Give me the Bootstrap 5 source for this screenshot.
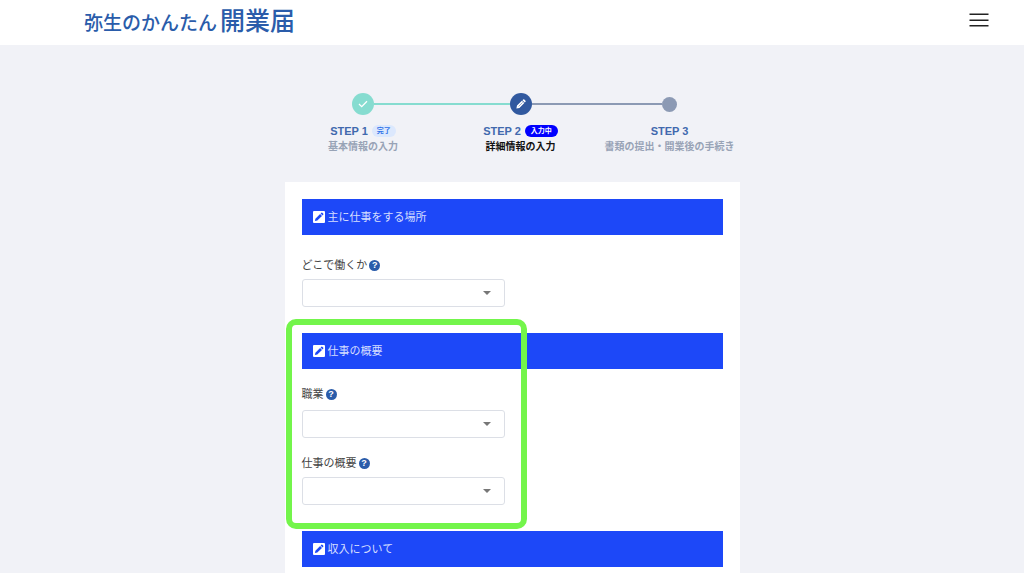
<!DOCTYPE html>
<html lang="ja">
<head>
<meta charset="utf-8">
<meta name="viewport" content="width=device-width, initial-scale=1">
<title>弥生のかんたん開業届</title>
<link href="https://cdn.jsdelivr.net/npm/bootstrap@5.3.0/dist/css/bootstrap.min.css" rel="stylesheet">
<style>
body{background:#f1f2f7;color:#444;font-family:"Liberation Sans","Noto Sans CJK JP",sans-serif;font-size:11px;line-height:16px}
.site-header{height:45px;padding:0 35px 4px 84px}
.brand{color:#2a5caa;font-size:19px;font-weight:500;line-height:32px;padding-top:4px}
.brand:hover{color:#2a5caa}
.brand strong{font-size:25px;font-weight:500;margin-left:3px}
.flow{max-width:455px}
.steps{display:grid;grid-template-columns:157fr 158fr 140fr;margin-top:48px;margin-bottom:28px}
.track{height:22px}
.track i{flex:1;height:2px;background:#8c9ab4}
.track i.passed{background:#86dcd0}
.track i.blank{background:none}
.dot{width:22px;height:22px;border-radius:50%;background:#86dcd0}
.dot.now{background:#31599f}
.dot.todo{width:15px;height:15px;background:#8c9ab4}
.step-name{color:#4169ae;font-weight:700;margin-top:8px;height:16px}
.step-text{color:#98a3b6;font-size:10px;font-weight:700;line-height:14px;margin-top:1px}
.step-text.now{color:#111}
.tag{font-size:7px;line-height:12px;padding:0 5px;border-radius:6px;background:#dce8fd;color:#2f72e8}
.tag.now{background:#00f;color:#fff;padding:0 6px}
.panel{padding:17px 17px 0}
.bar{height:36px;padding:0 11px;gap:3px;background:#1d48f8;color:#d5deff;font-size:11px;line-height:16px;font-weight:400}
.field{padding-top:22px;padding-bottom:26px}
.caption{gap:2px}
.field label,.help{display:block;line-height:16px}
.field .pick{width:203px;height:28px;margin-top:6px;padding:0 24px 0 8px;font-size:11px;border:1px solid #dcdfe6;border-radius:3px;background:#fff url("data:image/svg+xml,%3Csvg xmlns='http://www.w3.org/2000/svg' viewBox='0 0 8 4'%3E%3Cpath fill='%23777' d='M0 0h8L4 4z'/%3E%3C/svg%3E") no-repeat right 13px center/8px 4px}
.field.tight{padding-top:17px;padding-bottom:0}
.field.tight .pick{margin-top:8px}
.field.last{padding-top:17px}
.help{width:11px;height:11px;border-radius:50%;background:#2a5caa;color:#fff;font-size:9px;font-weight:700;line-height:11px;border:0;padding:0;text-align:center}
.highlight{position:absolute;left:-16px;top:-14px;bottom:2px;width:241px;border:6px solid #73f54b;border-radius:10px;pointer-events:none}
</style>
</head>
<body>
<svg class="d-none" aria-hidden="true">
  <symbol id="edit" viewBox="0 0 12 12"><rect width="12" height="12" rx="1" fill="#fff"/><path d="M1.9 10.1 2.4 7.7 7.1 3 9 4.9 4.3 9.6zM7.6 2.5 8.4 1.7q.4-.4.9 0l1 1q.4.5 0 .9L9.5 4.4z" fill="#1d48f8"/></symbol>
</svg>
<header class="site-header bg-white d-flex justify-content-between align-items-center">
  <a href="#" class="brand text-decoration-none">弥生のかんたん<strong>開業届</strong></a>
  <button class="btn p-0 border-0 d-flex" type="button" aria-label="メニュー"><svg width="20" height="15" viewBox="0 0 20 15" fill="none" stroke="#222" stroke-width="1.6"><path d="M.5 1.2h19M.5 7.2h19M.5 12.8h19"/></svg></button>
</header>
<main class="flow container-fluid p-0">
  <div class="steps text-center">
    <div>
      <div class="track d-flex align-items-center"><i class="blank"></i><span class="dot d-flex align-items-center justify-content-center"><svg width="10" height="8" viewBox="0 0 10 8" fill="none" stroke="#fff" stroke-width="1.3"><path d="M1 4l2.7 2.6L9 1.2"/></svg></span><i class="passed"></i></div>
      <div class="step-name d-flex justify-content-center align-items-center gap-1">STEP 1 <span class="tag">完了</span></div>
      <div class="step-text">基本情報の入力</div>
    </div>
    <div>
      <div class="track d-flex align-items-center"><i class="passed"></i><span class="dot now d-flex align-items-center justify-content-center"><svg width="10" height="10" viewBox="0 0 10 10" fill="#fff"><path d="M.4 9.6 1 6.6 5.9 1.7 8.3 4.1 3.4 9zM6.4 1.2 7.2.5q.6-.5 1.1 0l1.2 1.2q.5.6 0 1.1L8.8 3.6z"/><path d="M2.6 7.4 6.6 3.4" stroke="#31599f" stroke-width=".5"/></svg></span><i></i></div>
      <div class="step-name d-flex justify-content-center align-items-center gap-1">STEP 2 <span class="tag now">入力中</span></div>
      <div class="step-text now">詳細情報の入力</div>
    </div>
    <div>
      <div class="track d-flex align-items-center"><i></i><span class="dot todo"></span><i class="blank"></i></div>
      <div class="step-name d-flex justify-content-center align-items-center">STEP 3</div>
      <div class="step-text text-nowrap">書類の提出・開業後の手続き</div>
    </div>
  </div>
  <form class="panel bg-white">
    <section>
      <h2 class="bar m-0 d-flex align-items-center"><svg width="12" height="12"><use href="#edit"/></svg>主に仕事をする場所</h2>
      <div class="field">
        <div class="caption d-flex align-items-center"><label for="place">どこで働くか</label><button type="button" class="help" aria-label="ヘルプ">?</button></div>
        <select id="place" class="form-select pick"><option></option></select>
      </div>
    </section>
    <section class="position-relative">
      <h2 class="bar m-0 d-flex align-items-center"><svg width="12" height="12"><use href="#edit"/></svg>仕事の概要</h2>
      <div class="field tight">
        <div class="caption d-flex align-items-center"><label for="job">職業</label><button type="button" class="help" aria-label="ヘルプ">?</button></div>
        <select id="job" class="form-select pick"><option></option></select>
      </div>
      <div class="field last">
        <div class="caption d-flex align-items-center"><label for="summary">仕事の概要</label><button type="button" class="help" aria-label="ヘルプ">?</button></div>
        <select id="summary" class="form-select pick"><option></option></select>
      </div>
      <div class="highlight"></div>
    </section>
    <section class="pb-2">
      <h2 class="bar m-0 d-flex align-items-center"><svg width="12" height="12"><use href="#edit"/></svg>収入について</h2>
    </section>
  </form>
</main>
<script src="https://cdn.jsdelivr.net/npm/bootstrap@5.3.0/dist/js/bootstrap.bundle.min.js"></script>
</body>
</html>
